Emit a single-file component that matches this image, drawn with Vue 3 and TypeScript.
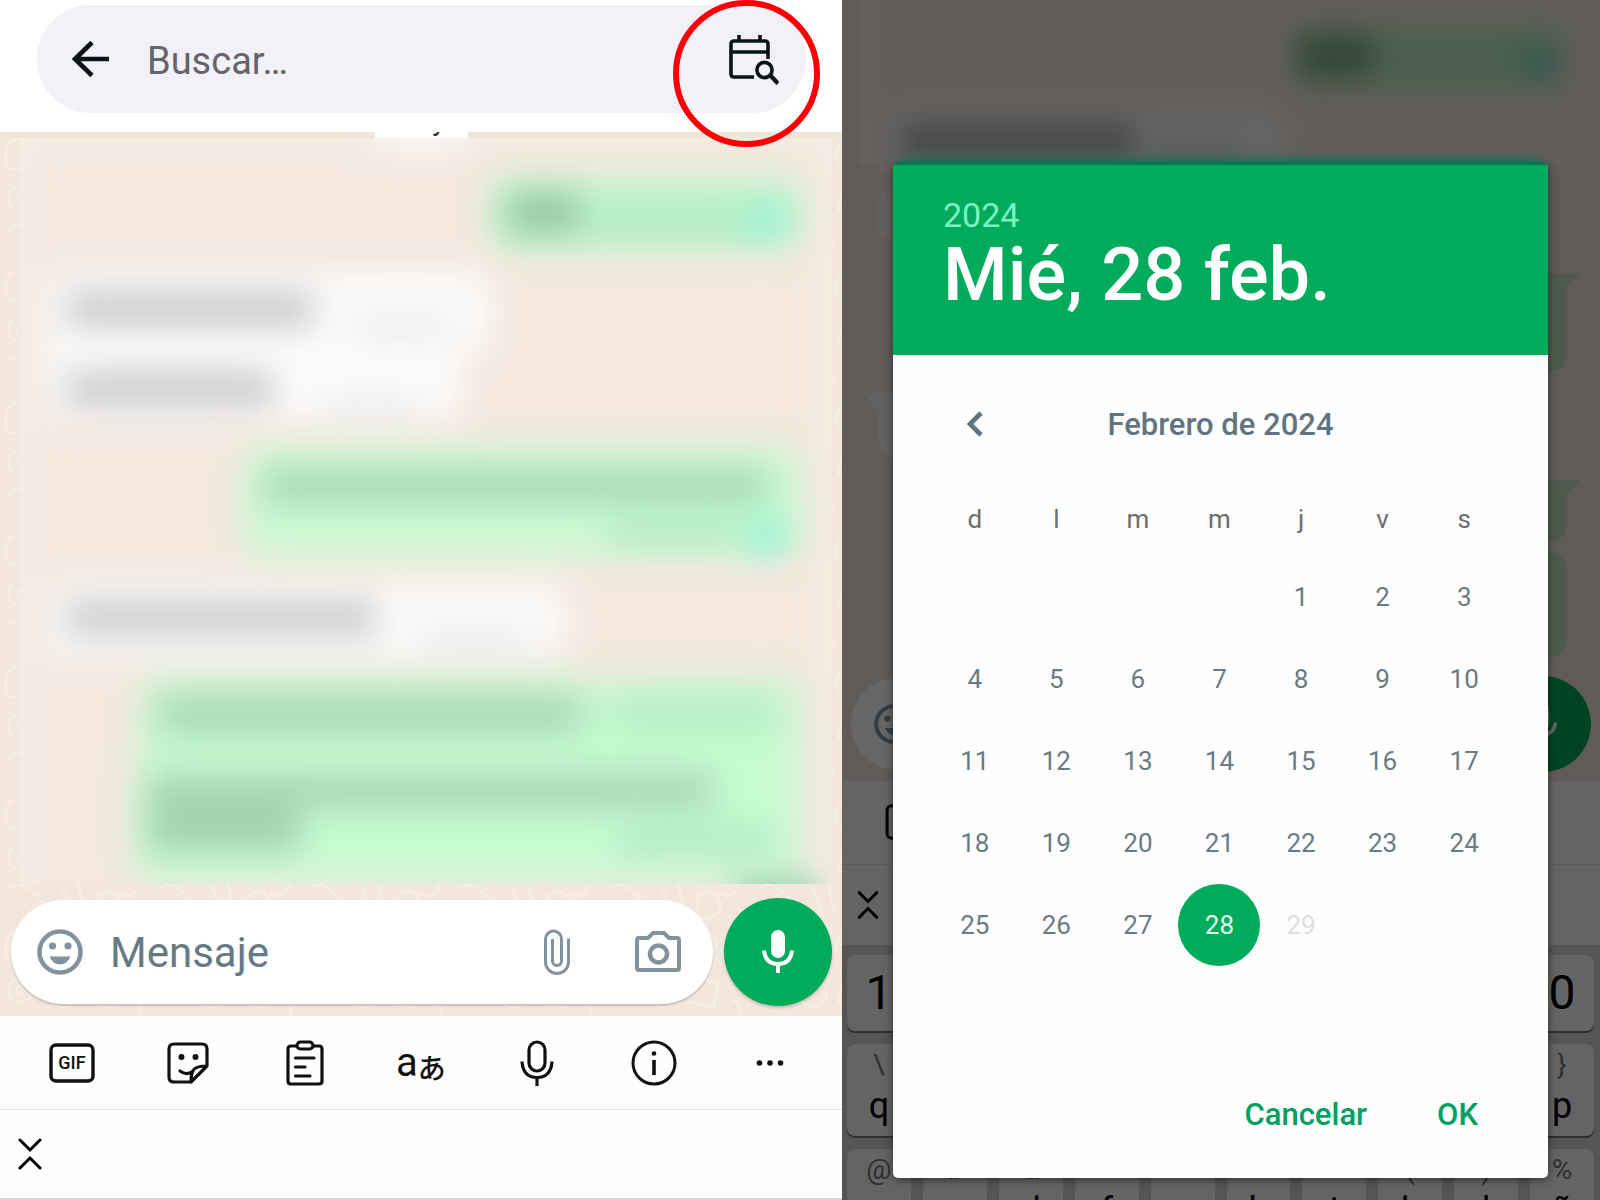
<script setup lang="ts">
import { computed, ref } from 'vue'

const weekdays: string[] = ['d', 'l', 'm', 'm', 'j', 'v', 's']
const weekdayNames: string[] = ['Dom', 'Lun', 'Mar', 'Mié', 'Jue', 'Vie', 'Sáb']
const firstWeekday = 4
const daysInMonth = 29
const today = 28

const selected = ref<number>(28)
const search = ref<string>('')
const message = ref<string>('')

const weeks = computed<(number | null)[][]>(() =>
  Array.from({ length: 6 }, (_, week) =>
    Array.from({ length: 7 }, (_, column) => {
      const day = week * 7 + column - firstWeekday + 1
      return day >= 1 && day <= daysInMonth ? day : null
    }),
  ),
)

const headline = computed<string>(
  () => `${weekdayNames[(selected.value + firstWeekday - 1) % 7]}, ${selected.value} feb.`,
)

// The dialog covers the middle keys of the upper rows, so those carry no labels.
const numberKeys: string[] = ['1', '', '', '', '', '', '', '', '', '0']
const letterRows: [string, string][][] = [
  [['\\', 'q'], ['', ''], ['', ''], ['', ''], ['', ''], ['', ''], ['', ''], ['', ''], ['', ''], ['}', 'p']],
  [['@', 'a'], ['#', 's'], ['&', 'd'], ['', 'f'], ['', 'g'], ['', 'h'], ['', 'j'], ['(', 'k'], [')', 'l'], ['%', 'ñ']],
]
</script>

<template>
  <main class="page">
    <section class="phone">
      <header class="topbar">
        <div class="search">
          <button class="icon-btn back" type="button" aria-label="Atrás">
            <svg width="40" height="40" viewBox="0 0 40 40" fill="none" stroke="#0b141a" stroke-width="4.600">
              <path d="M38 20H4M21 3.500 4 20l17 16.500" />
            </svg>
          </button>
          <input v-model="search" class="search-input" type="text" placeholder="Buscar…" aria-label="Buscar" />
          <button class="icon-btn" type="button" aria-label="Buscar por fecha">
            <svg width="50" height="56" viewBox="0 -4 50 56" fill="none" stroke="#0b141a" stroke-width="3.600">
              <path d="M39 24V9q0-3-3-3H5Q2 6 2 9v30q0 3 3 3h20M2 17h37M10 0v6M31 0v6" />
              <circle cx="35.500" cy="35" r="7.600" />
              <path d="m41 40 8 8.500" stroke-width="4.200" />
            </svg>
          </button>
        </div>
        <span class="marker" aria-hidden="true"></span>
      </header>

      <div class="chat">
        <svg class="wallpaper" aria-hidden="true">
          <defs>
            <pattern id="doodles" width="150" height="132" patternUnits="userSpaceOnUse">
              <g fill="none" stroke="#f8f0e7" stroke-width="1.500">
                <path d="M8 12q16-14 24 2t-12 22-12-24M50 4l20 16-6 18-22-8ZM92 10c22-12 34 14 14 22s-26-8-14-22M128 6q12 10 2 24t8 26" />
                <circle cx="20" cy="66" r="12" />
                <circle cx="20" cy="66" r="4" />
                <path d="M48 54q18-8 26 8t-10 22q-20-4-16-30M94 52l24 8-4 24-26-6ZM132 76q14 6 6 20t-18 4M8 98q10-10 22 0t18 20M62 96l10 24M78 92l6 26M98 104q12-10 20 2t-8 20-12-22" />
              </g>
            </pattern>
          </defs>
          <rect width="100%" height="100%" fill="url(#doodles)" />
        </svg>
        <div class="date-strip"><span class="date-chip">Hoy</span></div>

        <svg class="messages" viewBox="0 0 812 746" preserveAspectRatio="none" role="img" aria-label="Mensajes desenfocados">
          <defs>
            <filter id="soft" x="-30%" y="-60%" width="160%" height="220%" color-interpolation-filters="sRGB"><feGaussianBlur stdDeviation="18" /></filter>
            <filter id="smudge" x="-30%" y="-60%" width="160%" height="220%" color-interpolation-filters="sRGB"><feGaussianBlur stdDeviation="16" /></filter>
          </defs>
          <rect width="812" height="746" fill="#f4e8df" />
          <g filter="url(#soft)">
            <rect x="-10" y="-20" width="832" height="24" fill="#f2eee4" />
            <rect x="-14" y="-10" width="20" height="780" fill="#f6efe7" />
            <rect x="806" y="-10" width="24" height="780" fill="#f6f0e6" />
            <rect x="354" y="-30" width="94" height="40" fill="#fafafa" />
          </g>
          <g filter="url(#soft)">
            <rect x="472" y="42" width="308" height="68" rx="8" fill="#bdf6ca" />
            <rect x="26" y="134" width="444" height="80" rx="8" fill="#fbfbfb" />
            <rect x="26" y="210" width="414" height="72" rx="8" fill="#fbfbfb" />
            <rect x="226" y="312" width="554" height="104" rx="8" fill="#c6fad0" />
            <rect x="26" y="446" width="518" height="74" rx="8" fill="#fafafa" />
            <rect x="122" y="542" width="658" height="80" rx="8" fill="#c4f8ce" />
            <rect x="116" y="610" width="664" height="132" rx="8" fill="#c6fad0" />
          </g>
          <g filter="url(#smudge)">
            <g fill="#96c5a4">
              <rect x="488" y="56" width="72" height="38" />
              <rect x="244" y="332" width="502" height="32" opacity=".65" />
              <rect x="140" y="558" width="420" height="36" opacity=".6" />
              <rect x="128" y="636" width="564" height="34" opacity=".65" />
              <rect x="128" y="668" width="152" height="44" opacity=".75" />
            </g>
            <g fill="#cdcdcf">
              <rect x="46" y="152" width="248" height="38" />
              <rect x="46" y="232" width="208" height="38" />
              <rect x="46" y="462" width="310" height="36" />
            </g>
            <g fill="#e6e6e8">
              <rect x="334" y="180" width="96" height="18" />
              <rect x="304" y="262" width="96" height="16" />
              <rect x="404" y="494" width="100" height="18" />
            </g>
            <g fill="#aee4be">
              <rect x="570" y="74" width="160" height="18" />
              <rect x="590" y="386" width="130" height="18" />
              <rect x="600" y="566" width="150" height="16" />
              <rect x="600" y="692" width="150" height="20" />
            </g>
            <g fill="#90efdc">
              <rect x="730" y="68" width="34" height="28" />
              <rect x="730" y="382" width="34" height="32" />
            </g>
            <rect x="716" y="744" width="80" height="30" fill="#7fd0a0" />
          </g>
        </svg>

        <div class="composer">
          <div class="message-box">
            <button class="icon-btn" type="button" aria-label="Emojis">
              <svg width="46" height="46" viewBox="0 0 46 46">
                <circle cx="23" cy="23" r="20.500" fill="none" stroke="#82939e" stroke-width="4.500" />
                <g fill="#82939e"><circle cx="15.500" cy="17" r="3.600" /><circle cx="31" cy="17" r="3.600" /><path d="M12.500 27.500h21q-3.500 8-10.500 8t-10.500-8" /></g>
              </svg>
            </button>
            <input v-model="message" class="message-input" type="text" placeholder="Mensaje" aria-label="Mensaje" />
            <button class="icon-btn clip" type="button" aria-label="Adjuntar">
              <svg width="28" height="46" viewBox="0 0 28 46" fill="none" stroke="#82939e" stroke-width="3">
                <path d="M25.500 9.500v23.500a11.500 11.500 0 0 1-23 0V10a8 8 0 0 1 16 0v22a4.500 4.500 0 0 1-9 0V10" />
              </svg>
            </button>
            <button class="icon-btn" type="button" aria-label="Cámara">
              <svg width="46" height="42" viewBox="0 0 46 42" fill="none" stroke="#82939e" stroke-width="4">
                <path d="M4 7h9l5-5h11l5 5h8q2 0 2 2v28q0 2-2 2H4q-2 0-2-2V9q0-2 2-2Z" />
                <circle cx="23.500" cy="23" r="8.500" stroke-width="4.500" />
              </svg>
            </button>
          </div>
          <button class="mic" type="button" aria-label="Grabar nota de voz">
            <svg width="34" height="46" viewBox="0 0 34 46">
              <rect x="10" y="1" width="14" height="28" rx="7" fill="#fff" />
              <path d="M3 21.500q1.500 13.500 14 13.500t14-13.500M17 35v9" fill="none" stroke="#fff" stroke-width="4" />
            </svg>
          </button>
        </div>
      </div>

      <nav class="tools" aria-label="Herramientas del teclado">
        <button class="icon-btn" type="button" aria-label="GIF">
          <svg width="46" height="40" viewBox="0 0 46 40">
            <rect x="2" y="2" width="42" height="36" rx="5" fill="none" stroke="#111" stroke-width="3.400" />
            <text x="23" y="26" text-anchor="middle" class="gif">GIF</text>
          </svg>
        </button>
        <button class="icon-btn" type="button" aria-label="Stickers">
          <svg width="42" height="42" viewBox="0 0 42 42" fill="none" stroke="#111" stroke-width="3.200" stroke-linejoin="round" stroke-linecap="round">
            <path d="M24 40H7q-5 0-5-5V7q0-5 5-5h28q5 0 5 5v17L24 40q0-8 2.500-12T40 24" />
            <path d="M13 29q6 4.500 12 1" />
            <circle cx="14.500" cy="15" r="1.400" /><circle cx="28.500" cy="15" r="1.400" />
          </svg>
        </button>
        <button class="icon-btn" type="button" aria-label="Portapapeles">
          <svg width="38" height="46" viewBox="0 0 38 46" fill="none" stroke="#111" stroke-width="3.200" stroke-linecap="round">
            <path d="M10 6H5Q2 6 2 9v32q0 3 3 3h28q3 0 3-3V9q0-3-3-3h-5" />
            <rect x="11" y="2" width="16" height="7" rx="3.500" />
            <path d="M9.500 18H28M9.500 27H19M9.500 36H24" />
          </svg>
        </button>
        <button class="icon-btn translate" type="button" aria-label="Traducir">
          <span class="latin">a</span><span class="kana" lang="ja">あ</span>
        </button>
        <button class="icon-btn" type="button" aria-label="Dictado">
          <svg width="34" height="46" viewBox="0 0 34 46" fill="none" stroke="#111" stroke-width="3.200">
            <rect x="9" y="2" width="16" height="29" rx="8" />
            <path d="M2 21.500q1 16 15 16t15-16M17 37.500V46" />
          </svg>
        </button>
        <button class="icon-btn" type="button" aria-label="Información">
          <svg width="46" height="46" viewBox="0 0 46 46" fill="none" stroke="#111" stroke-width="3">
            <circle cx="23" cy="23" r="21" />
            <path d="M23 20v15" stroke-width="3.600" /><circle cx="23" cy="13.500" r="2.300" fill="#111" stroke="none" />
          </svg>
        </button>
        <button class="icon-btn" type="button" aria-label="Más">
          <svg width="28" height="8" viewBox="0 0 28 8" fill="#111">
            <circle cx="3.500" cy="4" r="2.800" /><circle cx="14" cy="4" r="2.800" /><circle cx="24.500" cy="4" r="2.800" />
          </svg>
        </button>
      </nav>
      <div class="suggestions">
        <button class="icon-btn" type="button" aria-label="Contraer">
          <svg width="24" height="34" viewBox="0 0 24 34" fill="none" stroke="#000" stroke-width="3" stroke-linecap="round">
            <path d="m2 3 10 10L22 3M2 31l10-10 10 10" />
          </svg>
        </button>
      </div>
    </section>

    <section class="phone-dimmed">
      <div class="backdrop" aria-hidden="true">
        <div class="dim-chat">
          <svg class="dim-art" viewBox="0 0 758 780" preserveAspectRatio="none">
            <defs>
              <filter id="haze" x="-30%" y="-60%" width="160%" height="220%" color-interpolation-filters="sRGB"><feGaussianBlur stdDeviation="14" /></filter>
              <clipPath id="top"><rect x="18" width="740" height="165" /></clipPath>
            </defs>
            <g fill="#f8f8f8">
              <path d="M36 165h60v10H48q-10-2-12-10" opacity=".4" />
              <rect x="34" y="184" width="80" height="60" rx="24" opacity=".6" />
              <path d="M21 392h60v66H54q-18-6-18-24v-22Z" opacity=".8" />
            </g>
            <g fill="#b0e2bb" opacity=".7">
              <path d="M690 273h48l-14 16v68q0 14-14 14h-20Z" />
              <path d="M690 480h48l-14 16v30q0 14-14 14h-20Z" />
              <path d="M690 552h20q14 0 14 14v76q0 14-14 14h-20Z" />
            </g>
            <g clip-path="url(#top)">
              <rect x="18" width="740" height="165" fill="#f4e8df" />
              <g filter="url(#haze)">
                <rect x="8" y="-20" width="12" height="200" fill="#fff" />
                <rect x="452" y="28" width="266" height="58" fill="#b8f0c0" />
                <rect x="458" y="36" width="72" height="40" fill="#7fae8a" />
                <rect x="682" y="44" width="34" height="38" fill="#88dcc4" />
                <rect x="42" y="110" width="398" height="70" fill="#fcfcfc" />
                <rect x="60" y="126" width="232" height="30" fill="#aaaaac" />
                <rect x="310" y="144" width="90" height="16" fill="#d2d2d4" />
              </g>
            </g>
          </svg>
          <div class="dim-composer">
            <div class="dim-box">
              <svg width="40" height="40" viewBox="0 0 46 46">
                <circle cx="23" cy="23" r="20.500" fill="none" stroke="#82939e" stroke-width="4.500" />
                <g fill="#82939e"><circle cx="15.500" cy="17" r="3.600" /><circle cx="31" cy="17" r="3.600" /><path d="M12.500 27.500h21q-3.500 8-10.500 8t-10.500-8" /></g>
              </svg>
            </div>
            <div class="dim-mic">
              <svg width="30" height="42" viewBox="0 0 34 46">
                <rect x="10" y="1" width="14" height="28" rx="7" fill="#fff" />
                <path d="M3 21.500q1.500 13.500 14 13.500t14-13.500M17 35v9" fill="none" stroke="#fff" stroke-width="4" />
              </svg>
            </div>
          </div>
        </div>
        <div class="dim-tools">
          <svg width="42" height="36" viewBox="0 0 46 40">
            <rect x="2" y="2" width="42" height="36" rx="5" fill="none" stroke="#111" stroke-width="3.400" />
          </svg>
        </div>
        <div class="dim-suggestions">
          <svg width="22" height="30" viewBox="0 0 24 34" fill="none" stroke="#000" stroke-width="3.400" stroke-linecap="round">
            <path d="m2 3 10 10L22 3M2 31l10-10 10 10" />
          </svg>
        </div>
        <div class="keyboard">
          <div class="key-row numbers">
            <span v-for="(key, index) in numberKeys" :key="index" class="key digit">{{ key }}</span>
          </div>
          <div v-for="(row, rowIndex) in letterRows" :key="rowIndex" class="key-row">
            <span v-for="([symbol, letter], index) in row" :key="index" class="key">
              <span class="symbol">{{ symbol }}</span>
              <span class="letter">{{ letter }}</span>
            </span>
          </div>
        </div>
      </div>

      <div class="scrim">
        <div class="dialog" role="dialog" aria-label="Elegir fecha">
          <header class="dialog-head">
            <p class="year">2024</p>
            <h1 class="headline">{{ headline }}</h1>
          </header>
          <div class="month-bar">
            <button class="icon-btn previous" type="button" aria-label="Mes anterior">
              <svg width="18" height="26" viewBox="0 0 18 26" fill="none" stroke="#61747f" stroke-width="4.600">
                <path d="M15 2 4 13l11 11" />
              </svg>
            </button>
            <h2 class="month">Febrero de 2024</h2>
          </div>
          <table class="calendar">
            <thead>
              <tr>
                <th v-for="(name, index) in weekdays" :key="index" scope="col">{{ name }}</th>
              </tr>
            </thead>
            <tbody>
              <tr v-for="(week, index) in weeks" :key="index">
                <td v-for="(day, column) in week" :key="column">
                  <button
                    v-if="day"
                    type="button"
                    class="day"
                    :class="{ selected: day === selected }"
                    :disabled="day > today"
                    @click="selected = day"
                  >{{ day }}</button>
                </td>
              </tr>
            </tbody>
          </table>
          <footer class="actions">
            <button class="action" type="button">Cancelar</button>
            <button class="action" type="button">OK</button>
          </footer>
        </div>
      </div>
    </section>
  </main>
</template>

<style>
body {
  margin: 0;
}
</style>

<style scoped>
* {
  box-sizing: border-box;
}

.page {
  display: grid;
  grid-template-columns: 842fr 758fr;
  min-height: 100vh;
  font-family: Roboto, "Liberation Sans", sans-serif;
  background: #fff;
}

svg {
  display: block;
  flex: none;
}

.icon-btn {
  display: flex;
  align-items: center;
  justify-content: center;
  flex: none;
  padding: 0;
  border: 0;
  background: none;
  color: inherit;
  font: inherit;
}

/* chat screen */
.phone {
  display: flex;
  flex-direction: column;
  min-width: 0;
}

.topbar {
  position: relative;
  height: 132px;
  padding: 5px 36px 0 37px;
}

.search {
  display: flex;
  align-items: center;
  height: 108px;
  padding: 0 27px 0 34px;
  border-radius: 54px;
  background: #f2f1f7;
}

.search-input,
.message-input {
  flex: 1;
  min-width: 0;
  padding: 0;
  border: 0;
  outline: 0;
  background: none;
  font-family: inherit;
}

.search-input {
  margin-left: 36px;
  padding-top: 3px;
  font-size: 38px;
}

.search-input::placeholder {
  color: #656469;
  opacity: 1;
}

.marker {
  position: absolute;
  z-index: 1;
  top: 0;
  right: 22px;
  width: 147px;
  height: 147px;
  border: 6px solid #fb0007;
  border-radius: 50%;
  pointer-events: none;
}

.chat {
  position: relative;
  display: flex;
  flex: 1;
  flex-direction: column;
  background: #f3e7dd;
}

.wallpaper {
  position: absolute;
  inset: 0;
  width: 100%;
  height: 100%;
}

.date-strip {
  position: relative;
  display: flex;
  align-items: flex-end;
  justify-content: center;
  height: 6px;
  overflow: hidden;
  background: #eee6d9;
}

.date-chip {
  padding: 0 22px;
  background: #fff;
  color: #333;
  font-size: 28px;
  line-height: 34px;
}

.messages {
  position: relative;
  flex: 1;
  width: calc(100% - 30px);
  min-height: 0;
  margin-left: 20px;
}

.composer {
  position: relative;
  display: flex;
  align-items: center;
  gap: 11px;
  padding: 14px 10px 10px 11px;
}

.message-box {
  display: flex;
  flex: 1;
  align-items: center;
  min-width: 0;
  height: 104px;
  padding: 0 32px 0 26px;
  border-radius: 52px;
  background: #fff;
  box-shadow: 0 2px 2px rgba(0, 0, 0, .18);
}

.message-input {
  margin-left: 27px;
  font-size: 42px;
}

.message-input::placeholder {
  color: #667a85;
  opacity: 1;
}

.clip {
  margin-right: 64px;
}

.mic {
  display: flex;
  align-items: center;
  justify-content: center;
  flex: none;
  width: 108px;
  height: 108px;
  padding: 0;
  border: 0;
  border-radius: 50%;
  background: #00ab5b;
  box-shadow: 0 2px 3px rgba(0, 0, 0, .2);
}

.tools {
  display: grid;
  grid-template-columns: repeat(7, 1fr);
  align-items: center;
  height: 94px;
  padding: 0 14px;
  border-bottom: 1px solid #e2e2e2;
  background: #fefefe;
}

.gif {
  fill: #111;
  font-size: 18px;
  font-weight: 500;
}

.translate {
  align-items: flex-end;
  color: #111;
}

.latin {
  font-size: 40px;
  line-height: 50px;
}

.kana {
  font-family: "Noto Sans CJK JP", sans-serif;
  font-size: 28px;
  font-weight: 500;
  line-height: 42px;
}

.suggestions {
  display: flex;
  align-items: center;
  height: 91px;
  padding-left: 18px;
  border-bottom: 3px solid #d6d6d6;
  background: #fefefe;
}

/* dimmed screen behind the dialog */
.phone-dimmed {
  display: grid;
  grid-template-columns: minmax(0, 1fr);
  grid-template-rows: minmax(0, 1fr);
  min-width: 0;
}

.backdrop,
.scrim {
  grid-area: 1 / 1;
}

.backdrop {
  display: flex;
  flex-direction: column;
  min-height: 0;
  overflow: hidden;
}

.dim-chat {
  position: relative;
  display: flex;
  flex: 3 1 780px;
  flex-direction: column;
  justify-content: flex-end;
  min-height: 0;
  background: #efe4db;
}

.dim-art {
  position: absolute;
  inset: 0;
  width: 100%;
  height: 100%;
}

.dim-composer {
  position: relative;
  display: flex;
  align-items: center;
  gap: 12px;
  padding: 0 9px 9px;
}

.dim-box {
  display: flex;
  flex: 1;
  align-items: center;
  height: 92px;
  padding-left: 23px;
  border-radius: 46px;
  background: #fff;
}

.dim-mic {
  display: flex;
  align-items: center;
  justify-content: center;
  width: 96px;
  height: 96px;
  border-radius: 50%;
  background: #00ab5b;
}

.dim-tools,
.dim-suggestions {
  display: flex;
  flex: none;
  align-items: center;
  background: #fafafa;
}

.dim-tools {
  height: 84px;
  padding-left: 43px;
  border-bottom: 1px solid #e0e0e0;
}

.dim-suggestions {
  height: 80px;
  padding-left: 15px;
}

.keyboard {
  display: flex;
  flex: 1 1 256px;
  flex-direction: column;
  gap: 13px;
  min-height: 0;
  padding: 10px 6px 0 5px;
  overflow: hidden;
  background: #d5d5d5;
}

.key-row {
  display: grid;
  flex: none;
  grid-template-columns: repeat(10, minmax(0, 1fr));
  gap: 12px;
  height: 92px;
}

.key-row.numbers {
  height: 76px;
}

.key {
  display: flex;
  flex-direction: column;
  align-items: center;
  border-radius: 8px;
  background: #fafafa;
  box-shadow: 0 2px 0 #777;
  color: #000;
}

.digit {
  justify-content: center;
  font-size: 48px;
}

.symbol {
  height: 42px;
  color: #777;
  font-size: 28px;
  line-height: 42px;
}

.letter {
  font-size: 36px;
  line-height: 40px;
}

/* date picker */
.scrim {
  position: relative;
  padding: 165px 52px 22px 51px;
  background: rgba(0, 0, 0, .6);
}

.dialog {
  border-radius: 2px 2px 5px 5px;
  background: #fefefe;
  box-shadow: 0 2px 8px rgba(0, 0, 0, .5);
}

.dialog-head {
  height: 190px;
  padding: 30px 50px 0;
  background: #00ab5b;
  box-shadow: 0 -6px 4px -3px #007a5a, 0 -14px 12px -10px #007a5a;
  color: #fff;
}

.year,
.headline,
.month {
  margin: 0;
  font-weight: 500;
}

.year {
  color: #7df3c4;
  font-size: 34px;
  font-weight: 400;
  line-height: 40px;
}

.headline {
  font-size: 74px;
  line-height: 80px;
}

.month-bar {
  display: grid;
  grid-template-columns: 81px 1fr 81px;
  align-items: center;
  height: 127px;
  padding: 11px 41px 0;
}

.previous {
  width: 81px;
}

.month {
  color: #61747f;
  font-size: 31px;
  text-align: center;
}

.calendar {
  width: calc(100% - 84px);
  margin-left: 41px;
  border-spacing: 0;
  table-layout: fixed;
}

.calendar th {
  height: 74px;
  padding: 0;
  color: #6d6d6d;
  font-size: 26px;
  font-weight: 400;
}

.calendar td {
  height: 82px;
  padding: 0;
  text-align: center;
}

.day {
  width: 82px;
  height: 82px;
  margin: 0 -1px;
  padding: 0;
  border: 0;
  border-radius: 50%;
  background: none;
  color: #697b85;
  font-family: inherit;
  font-size: 26px;
  vertical-align: middle;
}

.day:disabled {
  color: #dedede;
}

.day.selected {
  background: #00ab5b;
  color: #e4fff2;
}

.actions {
  display: flex;
  align-items: center;
  justify-content: flex-end;
  gap: 70px;
  height: 130px;
  padding: 3px 70px 0 0;
}

.action {
  padding: 0;
  border: 0;
  background: none;
  color: #00a062;
  font-family: inherit;
  font-size: 31px;
  font-weight: 500;
}
</style>
